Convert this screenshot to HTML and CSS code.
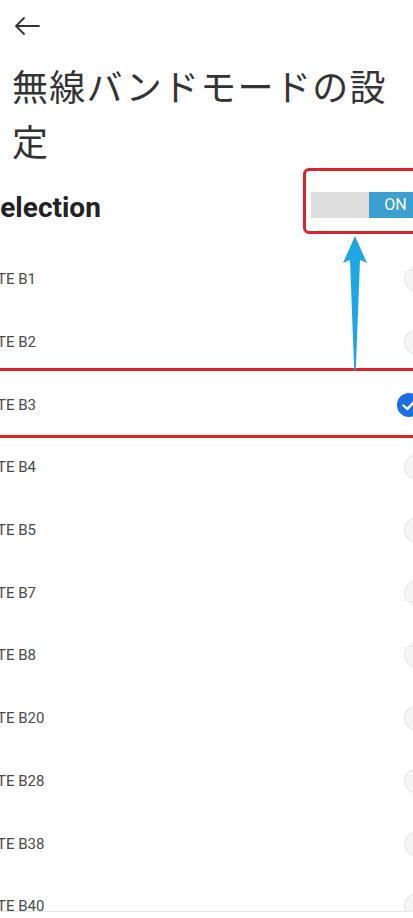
FILE: index.html
```html
<!DOCTYPE html>
<html>
    <head>
      <meta charset="utf-8">
      <title>無線バンドモードの設定</title>
      <link rel="stylesheet" href="styles.css">
    </head>

    <body>
        <div class="page">
            <div class="top_bar">
                <svg class="back_icon" width="28" height="20" viewBox="0 0 28 20">
                    <path d="M26 10H3M11 2L3 10l8 8" fill="none" stroke="#333" stroke-width="1.8" stroke-linecap="round" stroke-linejoin="round"/>
                </svg>
            </div>
            <h1 class="title">無線バンドモードの設定</h1>

            <div class="sel_head">
                <span class="sel_name">Selection</span>
                <div class="switch_wrap">
                    <div class="switch">
                        <span class="sw_off"></span>
                        <span class="sw_on">ON</span>
                    </div>
                </div>
            </div>

            <ul class="band_list">
                <li class="band_item"><span class="band_name">LTE B1</span><span class="radio"></span></li>
                <li class="band_item"><span class="band_name">LTE B2</span><span class="radio"></span></li>
                <li class="band_item mark"><span class="band_name">LTE B3</span><span class="radio checked">
                    <svg width="26" height="26" viewBox="0 0 26 26"><circle cx="13" cy="13" r="12" fill="#1c6fe3"/><path d="M7.5 13.5l3.8 3.6 7-7.6" fill="none" stroke="#fff" stroke-width="2.4" stroke-linecap="round" stroke-linejoin="round"/></svg>
                </span></li>
                <li class="band_item"><span class="band_name">LTE B4</span><span class="radio"></span></li>
                <li class="band_item"><span class="band_name">LTE B5</span><span class="radio"></span></li>
                <li class="band_item"><span class="band_name">LTE B7</span><span class="radio"></span></li>
                <li class="band_item"><span class="band_name">LTE B8</span><span class="radio"></span></li>
                <li class="band_item"><span class="band_name">LTE B20</span><span class="radio"></span></li>
                <li class="band_item"><span class="band_name">LTE B28</span><span class="radio"></span></li>
                <li class="band_item"><span class="band_name">LTE B38</span><span class="radio"></span></li>
                <li class="band_item"><span class="band_name">LTE B40</span><span class="radio"></span></li>
            </ul>

            <!-- 注釈の矢印 -->
            <svg class="up_arrow" width="30" height="134" viewBox="0 0 30 134">
                <path d="M15 0L27 27L20 24L15.8 134H14.2L10 24L3 27Z" fill="#1ea7e4"/>
            </svg>
        </div>
        <div class="nav_bar"></div>
    </body>
</html>
```

FILE: styles.css
```css
html, body{
    margin: 0;
    padding: 0;
    background: #fff;
}
body{
    width: 413px;
    height: 918px;
    overflow: hidden;
    font-family: Roboto, "Noto Sans CJK JP", sans-serif;
    color: #333;
}
.page{
    position: relative;
    width: 413px;
}
.top_bar{
    height: 52px;
    display: flex;
    align-items: center;
    padding-left: 13px;
}
.back_icon{
    display: block;
}
.title{
    margin: 6px 0 0 0;
    padding: 0 18px 0 12px;
    font-family: "Noto Sans CJK JP", sans-serif;
    font-weight: 400;
    font-size: 36px;
    letter-spacing: 1.3px;
    line-height: 55px;
    color: #333;
}
.sel_head{
    margin-top: 17px;
    height: 44px;
    display: flex;
    align-items: center;
    justify-content: space-between;
    margin-left: -17px;
}
.sel_name{
    font-size: 28px;
    font-weight: 700;
    color: #222;
}
.switch_wrap{
    align-self: flex-start;
    width: 124px;
    height: 66px;
    margin-top: -17px;
    margin-right: -14px;
    border: 3px solid #d9232d;
    border-radius: 6px;
    box-sizing: border-box;
    padding: 21px 0 0 5px;
}
.switch{
    display: flex;
    height: 26px;
}
.sw_off{
    width: 60px;
    background: #dedede;
}
.sw_on{
    width: 56px;
    background: #3a9fd1;
    color: #fff;
    font-size: 16px;
    line-height: 26px;
    padding-left: 15px;
    box-sizing: border-box;
}
.band_list{
    list-style: none;
    margin: 19px 0 0 0;
    padding: 0;
}
.band_item{
    position: relative;
    height: 62.7px;
    display: flex;
    align-items: center;
    justify-content: space-between;
    margin-left: -9px;
}
.band_name{
    font-size: 15px;
    color: #4a4a4a;
}
.radio{
    width: 26px;
    height: 26px;
    margin-right: -17px;
    border-radius: 50%;
    background: #f5f5f5;
    border: 1px solid #e6e6e6;
    box-sizing: border-box;
}
.radio.checked{
    background: none;
    border: none;
    margin-right: -9px;
}
.radio svg{
    display: block;
}
.band_item.mark::after{
    content: "";
    position: absolute;
    left: -10px;
    right: -20px;
    top: -5px;
    bottom: -2px;
    border: 3px solid #d9232d;
}
.up_arrow{
    position: absolute;
    left: 340px;
    top: 236px;
}
.nav_bar{
    position: fixed;
    left: 0;
    bottom: 0;
    width: 100%;
    height: 6px;
    background: #fff;
    border-top: 1px solid #e8e8e8;
}
```
